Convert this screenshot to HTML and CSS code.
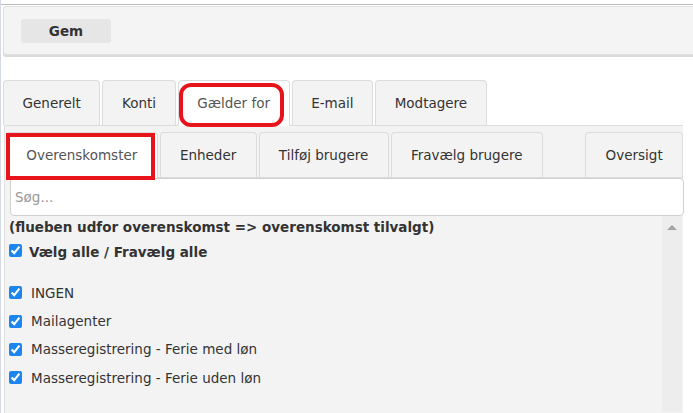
FILE: index.html
```html
<!DOCTYPE html>
<html lang="da">
<head>
<meta charset="utf-8">
<title>Gælder for</title>
<link rel="stylesheet" href="styles.css">
</head>
<body>
<div class="topline"></div>
<div class="toolbar"><button class="btn">Gem</button></div>
<div class="tabs">
  <ul class="tabbar main">
    <li class="tab">Generelt</li>
    <li class="tab">Konti</li>
    <li class="tab active mark-round">Gælder for</li>
    <li class="tab">E-mail</li>
    <li class="tab">Modtagere</li>
  </ul>
  <div class="panel">
    <ul class="tabbar sub">
      <li class="tab active mark-box">Overenskomster</li>
      <li class="tab">Enheder</li>
      <li class="tab">Tilføj brugere</li>
      <li class="tab">Fravælg brugere</li>
      <li class="tab push">Oversigt</li>
    </ul>
    <input class="search" type="text" placeholder="Søg...">
    <div class="listwrap">
      <div class="list">
        <div class="hint">(flueben udfor overenskomst =&gt; overenskomst tilvalgt)</div>
        <label class="all"><input class="cb" type="checkbox" checked><span>Vælg alle / Fravælg alle</span></label>
        <div class="items">
          <label class="item"><input class="cb" type="checkbox" checked><span>INGEN</span></label>
          <label class="item"><input class="cb" type="checkbox" checked><span>Mailagenter</span></label>
          <label class="item"><input class="cb" type="checkbox" checked><span>Masseregistrering - Ferie med løn</span></label>
          <label class="item"><input class="cb" type="checkbox" checked><span>Masseregistrering - Ferie uden løn</span></label>
        </div>
      </div>
      <div class="scrollbar"><span class="arrow"></span></div>
    </div>
  </div>
</div>
</body>
</html>
```
FILE: styles.css
```css
html, body {
  height: 100%;
}
body {
  margin: 0;
  border-left: 1px solid #d3d9e6;
  font-family: "DejaVu Sans", Verdana, sans-serif;
  font-size: 13.5px;
  color: #333;
  overflow: hidden;
  background: #fff;
}
.topline {
  height: 4px;
  border-bottom: 1px solid #bdbdbd;
}
.toolbar {
  margin: 1px 0 0 2px;
  height: 49px;
  box-sizing: border-box;
  background: #f4f4f4;
  border: 1px solid #e0e0e0;
  border-right: 0;
  border-radius: 3px 0 0 3px;
  box-shadow: 0 2px 0 #dadada;
  padding: 12px 0 0 17px;
}
.btn {
  display: block;
  width: 90px;
  height: 24px;
  border: 0;
  border-radius: 3px;
  background: #e6e6e6;
  font-family: "DejaVu Sans", Verdana, sans-serif;
  font-weight: bold;
  font-size: 13.5px;
  color: #333;
  padding: 0;
}
.tabs {
  margin: 25px 0 0 2px;
}
.tabbar {
  list-style: none;
  margin: 0;
  padding: 0;
  display: flex;
}
.tab {
  position: relative;
  border: 1px solid #dcdcdc;
  border-bottom: 0;
  border-radius: 4px 4px 0 0;
  background: #f3f3f3;
  padding: 14px 19.3px;
  line-height: 16px;
  margin-right: 2px;
  white-space: nowrap;
}
.main .tab {
  padding-left: 18.6px;
  padding-right: 18.6px;
}
.tab.active {
  background: #fff;
  color: #555;
  margin-bottom: -1px;
  padding-bottom: 15px;
  z-index: 1;
}
.mark-round::after {
  content: "";
  position: absolute;
  left: 0;
  top: 2px;
  right: 5px;
  bottom: -1px;
  border: 4px solid #e8141c;
  border-radius: 12px;
  pointer-events: none;
}
.panel {
  position: relative;
  margin-left: 1px;
  width: 679px;
  box-sizing: border-box;
  height: 288px;
  border-left: 1px solid #e0e0e0;
  border-top: 1px solid #dcdcdc;
  background: #f3f3f3;
  padding: 6px 0 0 1px;
}
.sub {
  border-bottom: 1px solid #dcdcdc;
}
.tab.push {
  margin-left: auto;
  margin-right: 0;
}
.mark-box::after {
  content: "";
  position: absolute;
  left: -1px;
  top: 0;
  right: 2px;
  bottom: -2px;
  border: 4px solid #e8141c;
  pointer-events: none;
}
.search {
  display: block;
  box-sizing: border-box;
  margin: 0 0 0 4px;
  width: 674px;
  height: 38px;
  border: 1px solid #cfcfcf;
  border-radius: 4px;
  padding: 0 4px;
  background: #fff;
  font-family: "DejaVu Sans", Verdana, sans-serif;
  font-size: 13.5px;
  color: #333;
  outline: none;
}
.search::placeholder {
  color: #999;
}
.listwrap {
  display: flex;
  margin: 0 1px 0 3px;
  height: 196px;
}
.list {
  flex: 1;
}
.hint {
  font-weight: bold;
  line-height: 18px;
  padding-top: 2px;
}
.all {
  display: flex;
  align-items: flex-start;
  margin-top: 7px;
  height: 18px;
  line-height: 18px;
  font-weight: bold;
}
.all .cb {
  margin: 1px 7px 0 0;
}
.cb {
  width: 13px;
  height: 13px;
  margin: 0;
  flex: none;
  accent-color: #1c86ee;
}
.items {
  margin-top: 17.5px;
}
.item {
  display: flex;
  align-items: center;
  height: 28.4px;
}
.item .cb {
  margin-right: 9px;
}
.scrollbar {
  width: 20px;
  background: #ededed;
  display: flex;
  justify-content: center;
  align-items: flex-start;
}
.arrow {
  margin-top: 9px;
  width: 0;
  height: 0;
  border-left: 5px solid transparent;
  border-right: 5px solid transparent;
  border-bottom: 5px solid #a3a3a3;
}
```
